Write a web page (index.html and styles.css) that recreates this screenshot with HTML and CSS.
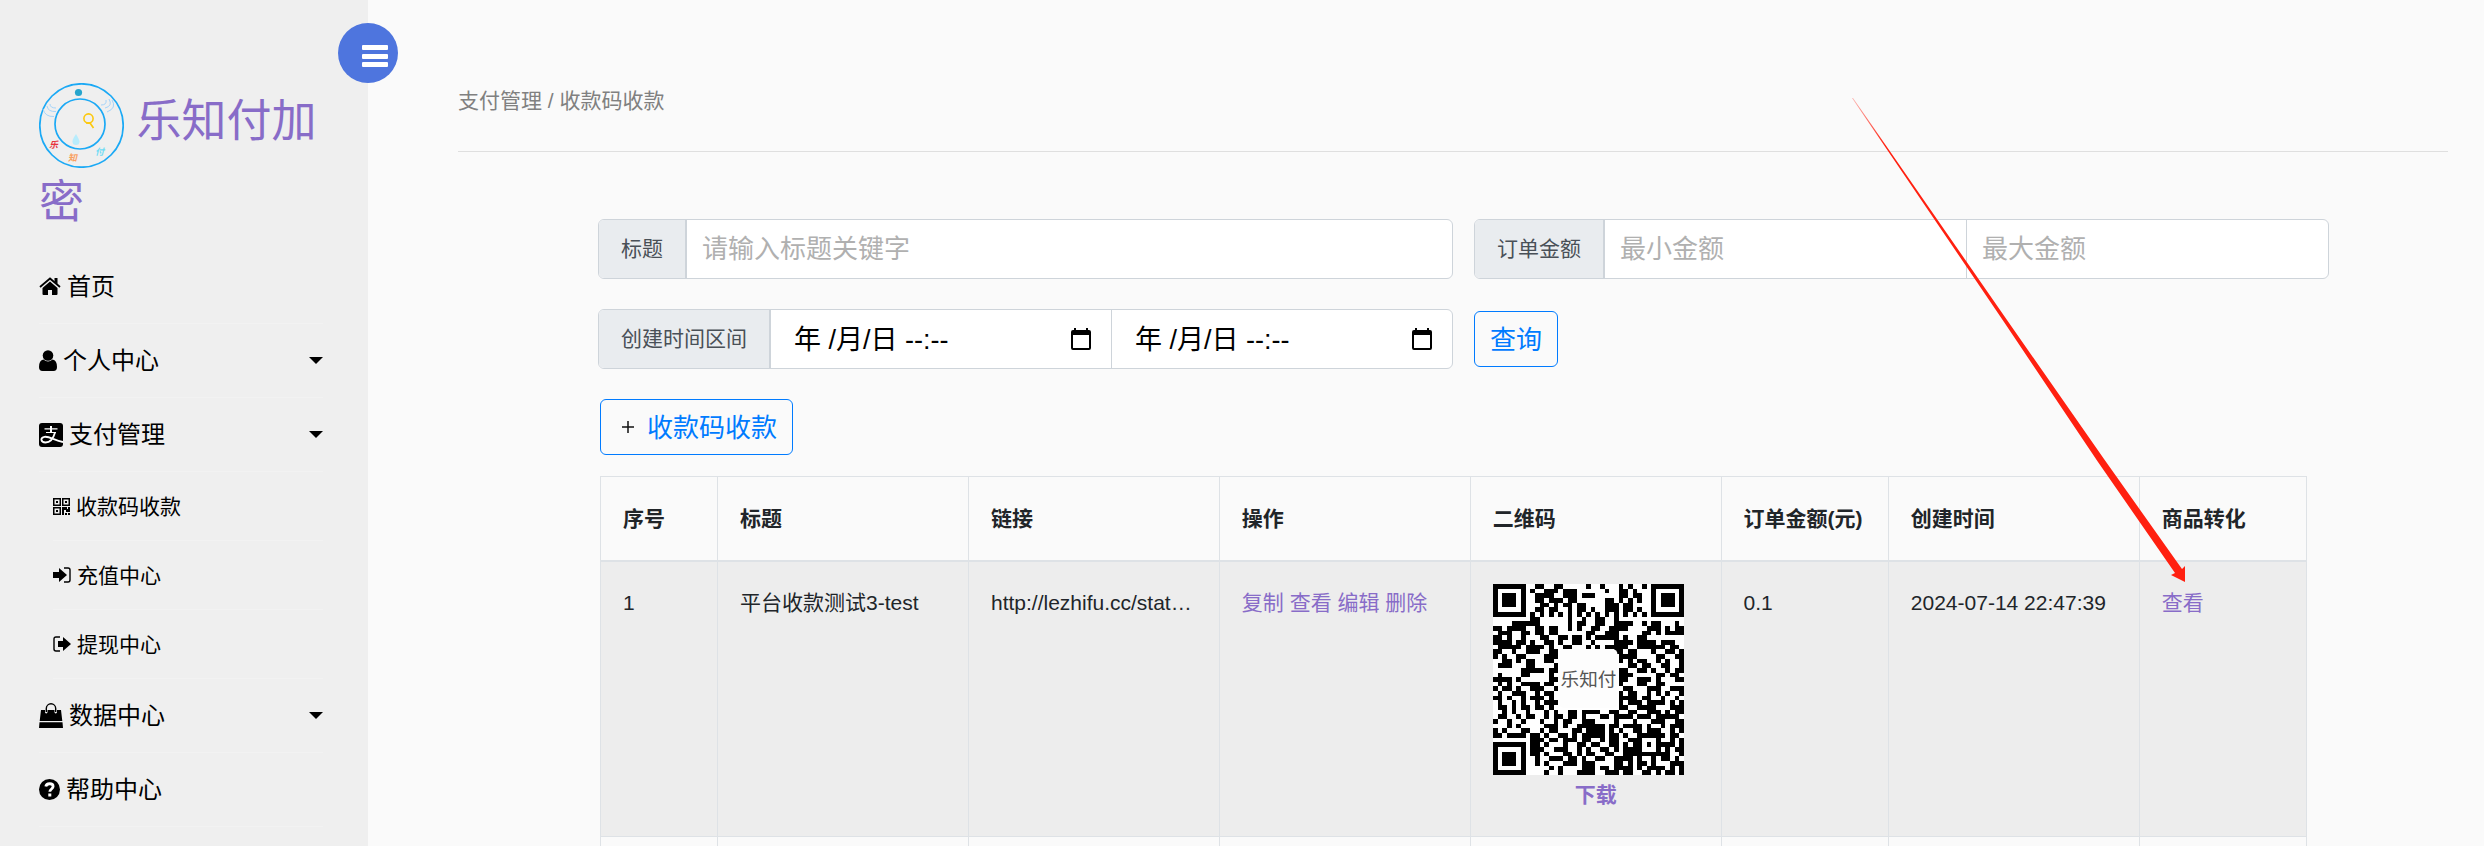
FILE: index.html
```html
<!DOCTYPE html>
<html lang="zh-CN">
<head>
    <meta charset="UTF-8">
    <meta name="viewport" content="width=device-width, initial-scale=1.0">
    <title>乐知付加密</title>
    <link rel="stylesheet" href="styles.css">
</head>
<body>
    <div class="wrapper">
        <nav class="sidebar">
            <button class="toggle-btn" type="button" aria-label="菜单">
                <svg width="26" height="22" viewBox="0 0 26 22" fill="#fff">
                    <rect width="26" height="5" rx="1"/>
                    <rect y="9" width="26" height="5" rx="1"/>
                    <rect y="17" width="26" height="5" rx="1"/>
                </svg>
            </button>
            <a class="brand" href="#">
                <svg class="brand-logo" viewBox="0 0 85 85" fill="none">
                    <circle cx="42.500" cy="42.500" r="41.700" stroke="#1ba9f5" stroke-width="1.700"/>
                    <circle cx="41" cy="41" r="25" stroke="#1ba9f5" stroke-width="1.700"/>
                    <circle cx="39.500" cy="9.500" r="3.600" fill="#27a5cd"/>
                    <g stroke="#a5d4fa" stroke-width="1">
                        <path d="M11 21q0 4 6 4M8 23q1 6 9 5.500M4 26q2 8 11 7.500"/>
                        <path d="M67 17q1 5-5 5M70 16q4 7-4 9M73 17q5 8-5 12"/>
                    </g>
                    <circle cx="49.500" cy="35.500" r="4.600" stroke="#fcc80e" stroke-width="1.600"/>
                    <path d="M51 40l3.500 5M47 40h5" stroke="#fcc80e" stroke-width="1.700"/>
                    <path d="M37 51q-3.500 5-3.500 7.500a3.500 3.500 0 0 0 7 0Q40 56 37 51z" fill="#b8ecfc"/>
                    <text class="logo-char" x="10" y="65" fill="#e8323c">乐</text>
                    <text class="logo-char" x="29" y="78" fill="#f9a060">知</text>
                    <text class="logo-char" x="56" y="72" fill="#6fdcf5">付</text>
                </svg>
                乐知付加密
            </a>
            <ul class="menu">
                <li>
                    <a href="#">
                        <svg width="22" height="19" viewBox="0 0 22 19"><path d="M11 4.500l7.500 6.500v6q0 1-1 1H13v-5H9v5H4.500q-1 0-1-1v-6z"/><path d="M1 10l10-8.500L21 10" fill="none" stroke="#000" stroke-width="1.800"/><path d="M15.500 1h3v6l-3-2.500z"/></svg>
                        首页
                    </a>
                </li>
                <li>
                    <a href="#">
                        <svg width="18" height="21" viewBox="0 0 18 21"><circle cx="9" cy="5.500" r="5.300"/><path d="M4.500 9.500C1.500 10 0 12.500 0 17q0 4 3.500 4h11q3.500 0 3.500-4c0-4.500-1.500-7-4.500-7.500Q9 13.500 4.500 9.500z"/></svg>
                        个人中心
                        <span class="caret"></span>
                    </a>
                </li>
                <li>
                    <a href="#">
                        <svg width="24" height="24" viewBox="0 0 24 24"><rect width="24" height="24" rx="3"/><g fill="none" stroke="#fff"><path d="M12 3v6.500" stroke-width="2"/><path d="M5.500 5.800h13M7 9.500h10" stroke-width="1.200"/><path d="M16 9.500C14.500 15 11 19.500 6.500 19.500c-5 0-5.500-5-1-5.700C10 13 15 17 24 19" stroke-width="1.800"/></g></svg>
                        支付管理
                        <span class="caret"></span>
                    </a>
                    <ul class="submenu">
                        <li>
                            <a href="#">
                                <svg width="17" height="17" viewBox="0 0 17 17"><path d="M0 0h8v8H0zM1.500 1.500v5h5v-5zM9 0h8v8H9zM10.500 1.500v5h5v-5zM0 9h8v8H0zM1.500 10.500v5h5v-5z" fill-rule="evenodd"/><path d="M3 3h2v2H3zM12 3h2v2h-2zM3 12h2v2H3zM9 9h5v2h1V9h2v5h-4v-2h-2v5H9zM12 15h2v2h-2zM15 15h2v2h-2z"/></svg>
                                收款码收款
                            </a>
                        </li>
                        <li>
                            <a href="#">
                                <svg width="18" height="16" viewBox="0 0 18 16"><path d="M0 5h6V1l8 7-8 7v-4H0z"/><path d="M11 1h4q2 0 2 2v10q0 2-2 2h-4" fill="none" stroke="#000" stroke-width="1.400"/></svg>
                                充值中心
                            </a>
                        </li>
                        <li>
                            <a href="#">
                                <svg width="18" height="16" viewBox="0 0 18 16"><path d="M5 5h5V1l8 7-8 7v-4H5z"/><path d="M7 1H3Q1 1 1 3v10q0 2 2 2h4" fill="none" stroke="#000" stroke-width="1.400"/></svg>
                                提现中心
                            </a>
                        </li>
                    </ul>
                </li>
                <li>
                    <a href="#">
                        <svg width="24" height="25" viewBox="0 0 24 25"><path d="M2 7h4v2.500q1.200 2 2.500 0V7h7v2.500q1.200 2 2.500 0V7h4l1.300 11H.7zM.5 19.200h23L24 25H0z"/><path d="M7.300 9V5.500a4.700 4.700 0 0 1 9.400 0V9" fill="none" stroke="#000" stroke-width="1.400"/></svg>
                        数据中心
                        <span class="caret"></span>
                    </a>
                </li>
                <li>
                    <a href="#">
                        <svg width="21" height="21" viewBox="0 0 21 21"><circle cx="10.500" cy="10.500" r="10.500"/><path d="M6.800 7.500c.7-3.800 7.300-3.500 7.300 0 0 2.500-3.300 2.500-3.300 5.300" fill="none" stroke="#fff" stroke-width="2.800"/><path d="M9.300 14.500h3v3h-3z" fill="#fff"/></svg>
                        帮助中心
                    </a>
                </li>
            </ul>
        </nav>

        <main class="content">
            <div class="breadcrumb">支付管理 / 收款码收款</div>
            <div class="panel">
                <form class="search-form">
                    <div class="input-group">
                        <label for="title">标题</label>
                        <input type="text" id="title" placeholder="请输入标题关键字">
                    </div>
                    <div class="input-group">
                        <label for="min-amount">订单金额</label>
                        <input type="text" id="min-amount" placeholder="最小金额">
                        <input type="text" id="max-amount" placeholder="最大金额" aria-label="最大金额">
                    </div>
                    <div class="input-group">
                        <label for="start-time">创建时间区间</label>
                        <div class="date-field">
                            <input type="text" id="start-time" value="年 /月/日 --:--">
                            <svg width="20" height="22" viewBox="0 0 20 22"><path d="M3 0h2v2h10V0h2v2h1q2 0 2 2v16q0 2-2 2H2q-2 0-2-2V4q0-2 2-2h1zM2 7v13h16V7z" fill-rule="evenodd"/></svg>
                        </div>
                        <div class="date-field">
                            <input type="text" id="end-time" value="年 /月/日 --:--" aria-label="结束时间">
                            <svg width="20" height="22" viewBox="0 0 20 22"><path d="M3 0h2v2h10V0h2v2h1q2 0 2 2v16q0 2-2 2H2q-2 0-2-2V4q0-2 2-2h1zM2 7v13h16V7z" fill-rule="evenodd"/></svg>
                        </div>
                    </div>
                    <div class="form-action">
                        <button class="btn" type="button">查询</button>
                    </div>
                </form>

                <div class="table-area">
                    <button class="btn btn-add" type="button">
                        <svg width="12" height="16" viewBox="0 0 12 16"><path d="M0 10h12M6 4v12" stroke="#111" stroke-width="1.500"/></svg>
                        收款码收款
                    </button>
                    <table class="table">
                        <colgroup>
                            <col class="col-no">
                            <col class="col-wide">
                            <col class="col-wide">
                            <col class="col-wide">
                            <col class="col-wide">
                            <col class="col-mid">
                            <col class="col-wide">
                            <col class="col-mid">
                        </colgroup>
                        <thead>
                            <tr>
                                <th>序号</th>
                                <th>标题</th>
                                <th>链接</th>
                                <th>操作</th>
                                <th>二维码</th>
                                <th>订单金额(元)</th>
                                <th>创建时间</th>
                                <th>商品转化</th>
                            </tr>
                        </thead>
                        <tbody>
                            <tr>
                                <td>1</td>
                                <td>平台收款测试3-test</td>
                                <td>http://lezhifu.cc/stat…</td>
                                <td><a href="#">复制</a> <a href="#">查看</a> <a href="#">编辑</a> <a href="#">删除</a></td>
                                <td class="qr-cell">
                                    <svg class="qr" viewBox="0 0 41 41">
                                        <rect width="41" height="41" fill="#fff"/>
                                        <path id="qr-modules" shape-rendering="crispEdges"/>
                                        <rect x="14.300" y="14" width="12.400" height="12.600" rx="1" fill="#fdfdfd"/>
                                        <text class="qr-text" x="20.500" y="21.800">乐知付</text>
                                    </svg>
                                    <a class="download" href="#">下载</a>
                                </td>
                                <td>0.1</td>
                                <td>2024-07-14 22:47:39</td>
                                <td><a href="#">查看</a></td>
                            </tr>
                            <tr>
                                <td></td>
                                <td></td>
                                <td></td>
                                <td></td>
                                <td></td>
                                <td></td>
                                <td></td>
                                <td></td>
                            </tr>
                        </tbody>
                    </table>
                </div>
            </div>
        </main>

        <svg class="pointer" width="340" height="490" viewBox="0 0 340 490">
            <defs>
                <linearGradient id="fade" x1="0" y1="0" x2="0" y2="1">
                    <stop offset="0" stop-color="#ff2010" stop-opacity="0.3"/>
                    <stop offset="0.100" stop-color="#ff2010"/>
                </linearGradient>
            </defs>
            <path d="M1 0h1L156 222L253 361L331 471L334 468L334 484L320 477L324 475L247 364L153 224z" fill="url(#fade)"/>
        </svg>
    </div>
    <script>
        const qrRows = [
            '#######..##..##.....#..#...#.#..#.#######',
            '#.....#.#..###.###......#..##.#...#.....#',
            '#.###.#..####..###.###.....##.##..#.###.#',
            '#.###.#..##.###.##......##.#.#.#..#.###.#',
            '#.###.#...##.#.##.##....###.##....#.###.#',
            '#.....#..##.##..#.##.#..###.##.#..#.....#',
            '#######.#.#.#.#.#.#.#.#.#.#.#.#.#.#######',
            '........##......#..#..##..#..............',
            '....######......#.##..##..####..#.##...#.',
            '##.####..##.##..#.#..##..####....###.#.##',
            '.###..##.##.##......##..###.....##.#.####',
            '##.#..#...##..##.##.#.#####.#..##........',
            '####.##.#..##.#..##..#....####.####.###..',
            '.#####.####.#..##...#.#.#####..######.##.',
            '##..#..###..##............##.##...#..##.#',
            '#.#..##....###.............####....##..##',
            '..##.#.##..##..............#.#.##..#.#..#',
            '.###...##....#...............##.##..##..#',
            '......#####.##.............##..##.#..#.##',
            '.#....##....#..............###.....##.##.',
            '####.#......##.............##..###.#...##',
            '.#.#..####.##..............#...##..##....',
            '#.##.#..###..#..............##...###..###',
            '.#..###..#.##..............#.##..#.#.#..#',
            '##.#..#.###.#..............####.##..#..#.',
            '.#..#.#..#.###.............#.###.####.#.#',
            '.##.#.##.##.#..............##..####...###',
            '..#.#..#...#.#..##.####..##..##..###.#.##',
            '.##..#.##..#.##.##.#...##.####.###.#####.',
            '#..#..#...#..#.##..###....#...#...###..##',
            '...#.#.....###.#..######.##.####.#..#.###',
            '#.#...##..#.##...##.####.#.#..##.###..#.#',
            '##.####.##.#..##.#.#####.##.#..######.##.',
            '........###.##.###.##..#.##..###...#..#.#',
            '#######.##.#...#..##.##..##.#.##.#.####.#',
            '#.....#.###..###..#.#..##.#.####...#.#.##',
            '#.###.#.##.#...##.#.##..##..##########..#',
            '#.###.#..#..###.##.#..##..####.#..#.##.#.',
            '#.###.#..#.#...###.###....##.#.##.#...###',
            '#.....#.....#.#....###.##.####.#.####.#.#',
            '#######....#..#...####..###.##..##.#.##.#'
        ];

        let d = '';
        qrRows.forEach((row, y) => {
            [...row].forEach((cell, x) => {
                if (cell === '#') d += `M${x} ${y}h1v1h-1z`;
            });
        });
        document.getElementById('qr-modules').setAttribute('d', d);
    </script>
</body>
</html>
```

FILE: styles.css
```css
* {
    margin: 0;
    padding: 0;
    box-sizing: border-box;
}

html, body {
    height: 100%;
    overflow: hidden;
}

body {
    background: #fafafa;
    color: #212529;
    font-family: "Liberation Sans", "Noto Sans CJK SC", sans-serif;
    font-size: 21px;
    line-height: 31px;
}

a {
    color: #886cc8;
    text-decoration: none;
}

ul {
    list-style: none;
}

input, button {
    font-family: inherit;
    font-size: 26px;
}

.wrapper {
    position: relative;
    display: flex;
    height: 100%;
}

/* sidebar */
.sidebar {
    position: relative;
    flex: 0 0 368px;
    padding: 83px 45px 0 39px;
    background: #efefef;
}

.toggle-btn {
    position: absolute;
    top: 23px;
    right: -30px;
    display: flex;
    justify-content: flex-end;
    align-items: center;
    width: 60px;
    height: 60px;
    padding: 6px 10px 0 0;
    border: none;
    border-radius: 50%;
    background: #4e75de;
    cursor: pointer;
}

.brand {
    display: block;
    margin-bottom: 13px;
    font-size: 45px;
    line-height: 69px;
}

.brand-logo {
    width: 85px;
    height: 85px;
    vertical-align: middle;
}

.logo-char {
    font-size: 9px;
    font-style: italic;
    font-weight: bold;
}

.menu a {
    display: flex;
    align-items: center;
    gap: 6px;
    height: 74px;
    border-bottom: 1px solid #f2f2f2;
    color: #000;
    font-size: 24px;
}

.submenu {
    padding-left: 14px;
}

.submenu a {
    height: 69px;
    font-size: 21px;
}

.caret {
    margin-left: auto;
    border-top: 7px solid #000;
    border-left: 7px solid transparent;
    border-right: 7px solid transparent;
}

/* content */
.content {
    flex: 1;
    min-width: 0;
    padding: 85px 36px 0 90px;
}

.breadcrumb {
    padding-bottom: 35px;
    border-bottom: 1px solid #dfdfdf;
    color: #808080;
}

.panel {
    padding: 67px 119px 0 140px;
}

.search-form {
    display: grid;
    grid-template-columns: 1fr 1fr;
    gap: 30px 21px;
}

.input-group {
    display: flex;
    height: 60px;
    border: 1px solid #ced4da;
    border-radius: 6px;
    background: #fff;
    overflow: hidden;
}

.input-group label {
    display: flex;
    align-items: center;
    padding: 0 22px 2px;
    border-right: 1px solid #ced4da;
    background: #e9ecef;
    color: #495057;
    white-space: nowrap;
}

.input-group input {
    flex: 1;
    width: 100%;
    min-width: 0;
    padding: 0 15px;
    border: none;
    border-left: 1px solid #ced4da;
    background: none;
    color: #000;
    outline: none;
}

.input-group input::placeholder {
    color: #b0b0b0;
}

.date-field {
    display: flex;
    flex: 1;
    align-items: center;
    min-width: 0;
    padding-right: 20px;
    border-left: 1px solid #ced4da;
}

.input-group .date-field input {
    padding: 0 0 4px 23px;
    border: none;
    font-size: 27px;
}

.form-action {
    display: flex;
    align-items: center;
}

.btn {
    height: 56px;
    padding: 0 15px 4px;
    border: 1px solid #007bff;
    border-radius: 6px;
    background: transparent;
    color: #007bff;
    cursor: pointer;
}

.btn-add {
    display: flex;
    align-items: center;
    gap: 13px;
    margin-bottom: 21px;
    padding: 0 15px 4px 21px;
}

.table-area {
    padding: 30px 22px 0 2px;
}

.table {
    width: 100%;
    border-collapse: collapse;
    table-layout: fixed;
}

.col-no {
    width: 7%;
}

.col-wide {
    width: 15%;
}

.col-mid {
    width: 10%;
}

.table th, .table td {
    padding: 26px 22px;
    border: 1px solid #dee2e6;
    text-align: left;
    vertical-align: top;
    white-space: nowrap;
}

.table th {
    border-bottom-width: 2px;
}

.table td {
    padding-top: 25px;
}

.table tbody tr:nth-child(odd) {
    background: #ededed;
}

.table .qr-cell {
    padding: 22px 22px 26px;
}

.qr {
    display: block;
    width: 191px;
    height: 191px;
}

.qr-text {
    fill: #555;
    font-size: 4px;
    text-anchor: middle;
}

.download {
    display: block;
    padding-top: 4px;
    font-weight: bold;
    text-align: center;
}

/* red arrow over the page */
.pointer {
    position: absolute;
    top: 98px;
    left: 1851px;
    pointer-events: none;
}
```
